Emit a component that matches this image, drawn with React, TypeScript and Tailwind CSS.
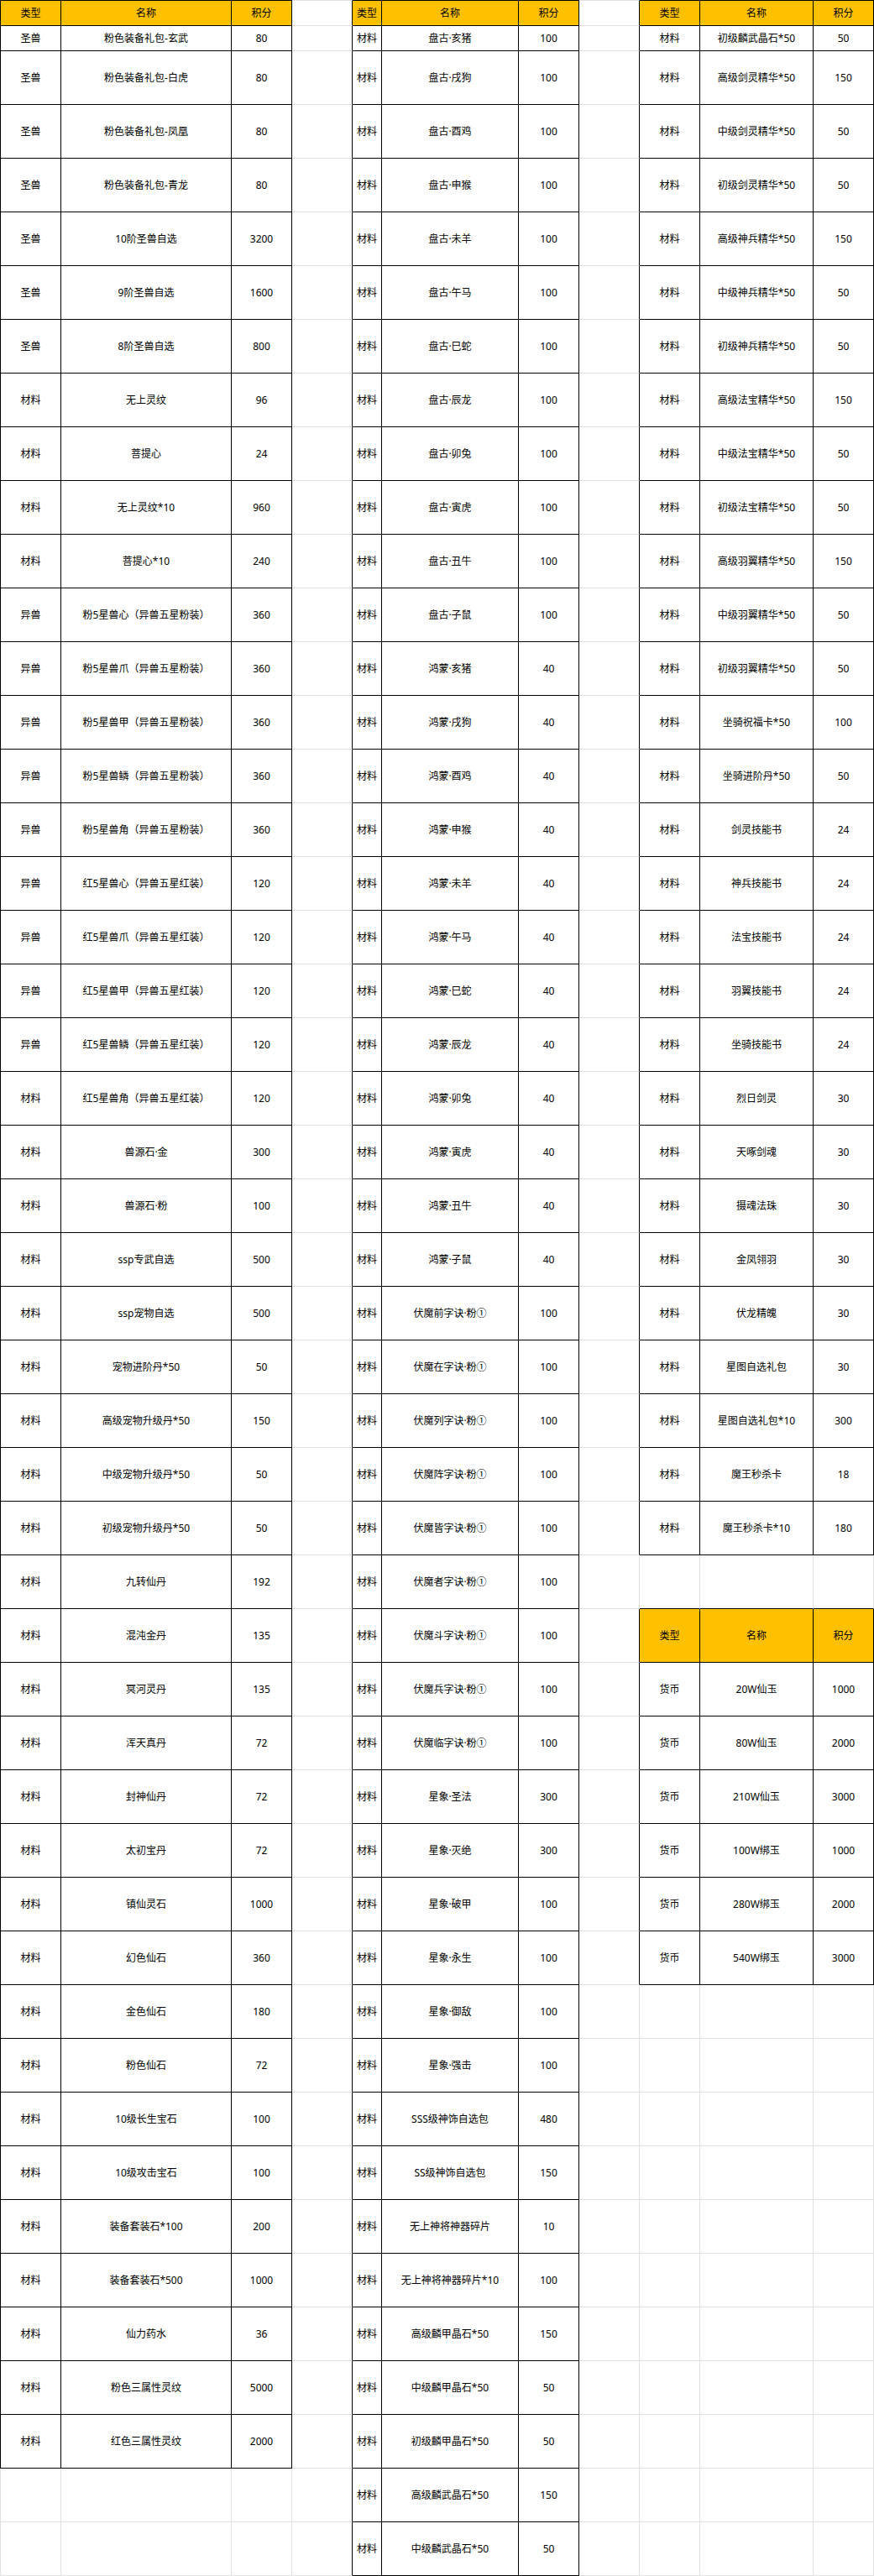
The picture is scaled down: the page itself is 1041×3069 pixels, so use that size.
import React from "react"

type Row = [string, string, string]

const headRow: Row = ["类型", "名称", "积分"]

const leftRows: Row[] = [
  ["圣兽", "粉色装备礼包-玄武", "80"],
  ["圣兽", "粉色装备礼包-白虎", "80"],
  ["圣兽", "粉色装备礼包-凤凰", "80"],
  ["圣兽", "粉色装备礼包-青龙", "80"],
  ["圣兽", "10阶圣兽自选", "3200"],
  ["圣兽", "9阶圣兽自选", "1600"],
  ["圣兽", "8阶圣兽自选", "800"],
  ["材料", "无上灵纹", "96"],
  ["材料", "菩提心", "24"],
  ["材料", "无上灵纹*10", "960"],
  ["材料", "菩提心*10", "240"],
  ["异兽", "粉5星兽心（异兽五星粉装）", "360"],
  ["异兽", "粉5星兽爪（异兽五星粉装）", "360"],
  ["异兽", "粉5星兽甲（异兽五星粉装）", "360"],
  ["异兽", "粉5星兽鳞（异兽五星粉装）", "360"],
  ["异兽", "粉5星兽角（异兽五星粉装）", "360"],
  ["异兽", "红5星兽心（异兽五星红装）", "120"],
  ["异兽", "红5星兽爪（异兽五星红装）", "120"],
  ["异兽", "红5星兽甲（异兽五星红装）", "120"],
  ["异兽", "红5星兽鳞（异兽五星红装）", "120"],
  ["材料", "红5星兽角（异兽五星红装）", "120"],
  ["材料", "兽源石·金", "300"],
  ["材料", "兽源石·粉", "100"],
  ["材料", "ssp专武自选", "500"],
  ["材料", "ssp宠物自选", "500"],
  ["材料", "宠物进阶丹*50", "50"],
  ["材料", "高级宠物升级丹*50", "150"],
  ["材料", "中级宠物升级丹*50", "50"],
  ["材料", "初级宠物升级丹*50", "50"],
  ["材料", "九转仙丹", "192"],
  ["材料", "混沌金丹", "135"],
  ["材料", "冥河灵丹", "135"],
  ["材料", "浑天真丹", "72"],
  ["材料", "封神仙丹", "72"],
  ["材料", "太初宝丹", "72"],
  ["材料", "镇仙灵石", "1000"],
  ["材料", "幻色仙石", "360"],
  ["材料", "金色仙石", "180"],
  ["材料", "粉色仙石", "72"],
  ["材料", "10级长生宝石", "100"],
  ["材料", "10级攻击宝石", "100"],
  ["材料", "装备套装石*100", "200"],
  ["材料", "装备套装石*500", "1000"],
  ["材料", "仙力药水", "36"],
  ["材料", "粉色三属性灵纹", "5000"],
  ["材料", "红色三属性灵纹", "2000"],
]

const zodiac = ["亥猪", "戌狗", "酉鸡", "申猴", "未羊", "午马", "巳蛇", "辰龙", "卯兔", "寅虎", "丑牛", "子鼠"]
const fumo = ["前", "在", "列", "阵", "皆", "者", "斗", "兵", "临"]

const midRows: Row[] = [
  ...zodiac.map((z): Row => ["材料", `盘古·${z}`, "100"]),
  ...zodiac.map((z): Row => ["材料", `鸿蒙·${z}`, "40"]),
  ...fumo.map((f): Row => ["材料", `伏魔${f}字诀·粉①`, "100"]),
  ["材料", "星象·圣法", "300"],
  ["材料", "星象·灭绝", "300"],
  ["材料", "星象·破甲", "100"],
  ["材料", "星象·永生", "100"],
  ["材料", "星象·御敌", "100"],
  ["材料", "星象·强击", "100"],
  ["材料", "SSS级神饰自选包", "480"],
  ["材料", "SS级神饰自选包", "150"],
  ["材料", "无上神将神器碎片", "10"],
  ["材料", "无上神将神器碎片*10", "100"],
  ["材料", "高级麟甲晶石*50", "150"],
  ["材料", "中级麟甲晶石*50", "50"],
  ["材料", "初级麟甲晶石*50", "50"],
  ["材料", "高级麟武晶石*50", "150"],
  ["材料", "中级麟武晶石*50", "50"],
]

const rightRows: Row[] = [
  ["材料", "初级麟武晶石*50", "50"],
  ["材料", "高级剑灵精华*50", "150"],
  ["材料", "中级剑灵精华*50", "50"],
  ["材料", "初级剑灵精华*50", "50"],
  ["材料", "高级神兵精华*50", "150"],
  ["材料", "中级神兵精华*50", "50"],
  ["材料", "初级神兵精华*50", "50"],
  ["材料", "高级法宝精华*50", "150"],
  ["材料", "中级法宝精华*50", "50"],
  ["材料", "初级法宝精华*50", "50"],
  ["材料", "高级羽翼精华*50", "150"],
  ["材料", "中级羽翼精华*50", "50"],
  ["材料", "初级羽翼精华*50", "50"],
  ["材料", "坐骑祝福卡*50", "100"],
  ["材料", "坐骑进阶丹*50", "50"],
  ["材料", "剑灵技能书", "24"],
  ["材料", "神兵技能书", "24"],
  ["材料", "法宝技能书", "24"],
  ["材料", "羽翼技能书", "24"],
  ["材料", "坐骑技能书", "24"],
  ["材料", "烈日剑灵", "30"],
  ["材料", "天啄剑魂", "30"],
  ["材料", "摄魂法珠", "30"],
  ["材料", "金凤翎羽", "30"],
  ["材料", "伏龙精魄", "30"],
  ["材料", "星图自选礼包", "30"],
  ["材料", "星图自选礼包*10", "300"],
  ["材料", "魔王秒杀卡", "18"],
  ["材料", "魔王秒杀卡*10", "180"],
]

const currencyRows: Row[] = [
  ["货币", "20W仙玉", "1000"],
  ["货币", "80W仙玉", "2000"],
  ["货币", "210W仙玉", "3000"],
  ["货币", "100W绑玉", "1000"],
  ["货币", "280W绑玉", "2000"],
  ["货币", "540W绑玉", "3000"],
]

const ROWS = 49
const COLS = 11

// which sheet cells belong to a bordered table
function inTable(r: number, c: number) {
  if (r < 0 || c < 0 || r >= ROWS || c >= COLS) return false
  if (c <= 2) return r <= leftRows.length
  if (c >= 4 && c <= 6) return r <= midRows.length
  if (c >= 8) return r <= rightRows.length || (r >= 31 && r <= 31 + currencyRows.length)
  return false
}

function cellInfo(r: number, c: number): { text: string; head: boolean } {
  if (!inTable(r, c)) return { text: "", head: false }
  if (c <= 2) return r === 0 ? { text: headRow[c], head: true } : { text: leftRows[r - 1][c], head: false }
  if (c <= 6) return r === 0 ? { text: headRow[c - 4], head: true } : { text: midRows[r - 1][c - 4], head: false }
  if (r === 0 || r === 31) return { text: headRow[c - 8], head: true }
  if (r <= rightRows.length) return { text: rightRows[r - 1][c - 8], head: false }
  return { text: currencyRows[r - 32][c - 8], head: false }
}

function Cell({ r, c }: { r: number; c: number }) {
  const { text, head } = cellInfo(r, c)
  const own = inTable(r, c)
  const right = own || inTable(r, c + 1) ? "border-r-black" : "border-r-[#e1e1e1]"
  const bottom = own || inTable(r + 1, c) ? "border-b-black" : "border-b-[#e1e1e1]"
  const left = c === 0 ? (own ? "border-l border-l-black" : "border-l border-l-[#e1e1e1]") : ""
  const top = r === 0 ? (own ? "border-t border-t-black" : "border-t border-t-[#e1e1e1]") : ""
  return (
    <div
      className={`flex items-center justify-center overflow-hidden whitespace-nowrap border-r border-b ${right} ${bottom} ${left} ${top} ${
        head ? "bg-[#ffc000]" : "bg-white"
      }`}
    >
      {text}
    </div>
  )
}

export default function App() {
  const cells = []
  for (let r = 0; r < ROWS; r++) {
    for (let c = 0; c < COLS; c++) {
      cells.push(<Cell key={`${r}-${c}`} r={r} c={c} />)
    }
  }

  return (
    <div className="w-[1041px] bg-white font-['Noto_Sans','Noto_Sans_CJK_SC',sans-serif] text-[12px] leading-none text-black">
      <div className="grid grid-cols-[73px_203px_72px_72px_35px_163px_72px_72px_72px_135px_72px] grid-rows-[31px_30px_repeat(47,64px)]">
        {cells}
      </div>
    </div>
  )
}
